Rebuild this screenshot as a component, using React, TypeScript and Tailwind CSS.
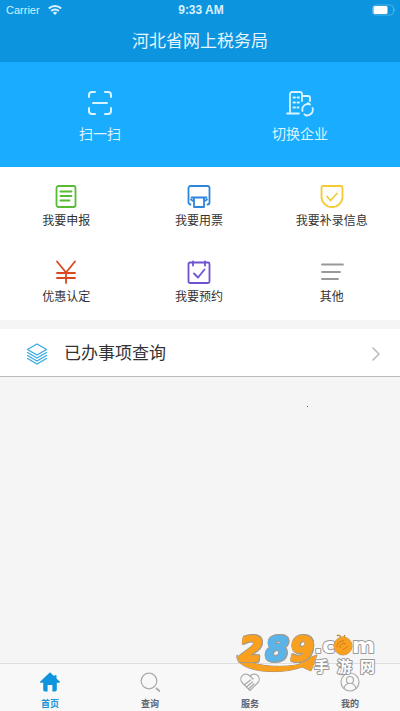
import type { ReactNode } from "react";

type Item = {
  label: string;
  icon: ReactNode;
};

const stroke = {
  fill: "none",
  stroke: "currentColor",
  strokeLinecap: "round",
  strokeLinejoin: "round",
} as const;

const quickActions: Item[] = [
  {
    label: "扫一扫",
    icon: (
      <svg className="h-7 w-7" viewBox="0 0 28 28" strokeWidth="2" {...stroke}>
        <path d="M3 8V6a3 3 0 0 1 3-3h3M19 3h3a3 3 0 0 1 3 3v2M25 19v3a3 3 0 0 1-3 3h-3M9 25H6a3 3 0 0 1-3-3v-3M7 14h14" />
      </svg>
    ),
  },
  {
    label: "切换企业",
    icon: (
      <svg className="h-7 w-7" viewBox="0 0 28 28" strokeWidth="1.8" {...stroke}>
        <path d="M1 24.500h12M4 24V5a2 2 0 0 1 2-2h8a2 2 0 0 1 2 2v7M16 7h6a2 2 0 0 1 2 2v3" />
        <path d="M7.500 8.500h1.500M11.500 8.500h1.500M7.500 13.500h1.500M11.500 13.500h1.500M7.500 18.500h1.500M11.500 18.500h1" />
        <path d="M24 15.500a5.500 5.500 0 0 0-7.500 6.500M24 15.500l-2-1.500M18.500 25.500a5.500 5.500 0 0 0 8-6.500M18.500 25.500l2 1.200" />
      </svg>
    ),
  },
];

const services: (Item & { color: string })[] = [
  {
    label: "我要申报",
    color: "text-[#57bb35]",
    icon: (
      <>
        <rect x="2.500" y="2" width="19" height="21" rx="2" />
        <path d="M6.500 7.500h11M6.500 12h11M6.500 16.500h9" />
      </>
    ),
  },
  {
    label: "我要用票",
    color: "text-[#2d86dc]",
    icon: (
      <>
        <path d="M3.500 20.500a2 2 0 0 1-2-2V4a2 2 0 0 1 2-2h17a2 2 0 0 1 2 2v14.500a2 2 0 0 1-2 2" />
        <path d="M4.500 13.500h15M7 13.500v9.500h10v-9.500M4 15.500l3 2M20 15.500l-3 2" />
      </>
    ),
  },
  {
    label: "我要补录信息",
    color: "text-[#f3cb35]",
    icon: (
      <>
        <path d="M3 2h18a1.500 1.500 0 0 1 1.500 1.500V13a10.500 10 0 0 1-21 0V3.500A1.500 1.500 0 0 1 3 2z" />
        <path d="M7 12.500l3.500 4 6.500-7" />
      </>
    ),
  },
  {
    label: "优惠认定",
    color: "text-[#d9481f]",
    icon: <path d="M3 1.500l9 11 9-11M12 12.500v10.500M3 13h18M3 18h18" />,
  },
  {
    label: "我要预约",
    color: "text-[#7052cf]",
    icon: (
      <>
        <rect x="1.500" y="2.500" width="21" height="20.500" rx="1.500" />
        <path d="M6 1.500v4M18 1.500v4M7 13.500l4 4 6.500-8" />
      </>
    ),
  },
  {
    label: "其他",
    color: "text-[#999]",
    icon: <path d="M2 4.500h21M2 12h18M2 19h16" />,
  },
];

const tabs: (Item & { active?: boolean })[] = [
  {
    label: "首页",
    active: true,
    icon: (
      <path
        d="M10 .3L.3 9.600c-.5.600-.2 1.100.5 1.100h2.400v7a1.800 1.800 0 0 0 1.800 1.800h2.600v-6.500h4.800v6.500h2.600a1.800 1.800 0 0 0 1.800-1.800v-7h2.400c.7 0 1-.5.500-1.100L16.500 6.500V3.300h-2.300v1z"
        fill="currentColor"
        stroke="none"
      />
    ),
  },
  {
    label: "查询",
    icon: (
      <>
        <circle cx="9" cy="9" r="7.800" />
        <path d="M16.500 16.500l3 2.500" strokeWidth="1.800" />
      </>
    ),
  },
  {
    label: "服务",
    icon: (
      <path d="M10 18.500L2.500 11C.5 9 .3 5.800 2 3.800 4 1.500 7.500 1.500 10 4c2.500-2.500 6-2.500 8-.2 1.700 2 1.500 5.200-.5 7.200zM10 4l3 3M10.500 8L4.500 12.800M12.500 10L6.500 15M14 12l-5.500 5" />
    ),
  },
  {
    label: "我的",
    icon: (
      <>
        <circle cx="10" cy="10" r="9" />
        <circle cx="10" cy="8" r="3.500" />
        <path d="M4 16.500c.5-3 2.500-4.500 4.200-5M16 16.500c-.5-3-2.500-4.500-4.200-5" />
      </>
    ),
  },
];

function StatusBar() {
  return (
    <div className="grid h-5 grid-cols-3 items-center pr-1 pl-1.5 text-[11px] text-[#d9f1ff]">
      <div className="flex items-center gap-2">
        <span>Carrier</span>
        <svg className="h-3 w-3.5" viewBox="0 0 14 12" fill="none" stroke="currentColor" strokeWidth="2">
          <path d="M.8 4.500a8.800 8.800 0 0 1 12.400 0M3.200 7a5.400 5.400 0 0 1 7.600 0" />
          <path d="M7 11L4.800 8.800a3.100 3.100 0 0 1 4.400 0z" fill="currentColor" stroke="none" />
        </svg>
      </div>
      <span className="text-center text-xs font-bold">9:33 AM</span>
      <svg className="h-3 w-6 justify-self-end" viewBox="0 0 24 12">
        <rect x=".5" y="1" width="21" height="10" rx="3" fill="none" stroke="#4db3ea" />
        <rect x="1.500" y="2" width="14" height="8" rx="1.500" fill="#fff" />
        <path d="M22.500 4.500a2 2 0 0 1 0 3z" fill="#5fbdf0" />
      </svg>
    </div>
  );
}

/** Site badge that floats over the bottom right corner. */
function Watermark() {
  return (
    <svg
      className="pointer-events-none absolute right-4 bottom-8 h-14 w-40 overflow-visible"
      viewBox="0 -8 160 56"
      paintOrder="stroke"
      strokeLinejoin="round"
    >
      <path
        d="M13 24C11 33 26 40 46 40.500C59 41 70 39 78 36L87 40L93 24L74 31L77 33C60 37 36 36 20 29z"
        fill="#f9a11f"
        stroke="#9a8c7c"
      />
      <g
        className="[filter:drop-shadow(1px_0_0_#a39a90)_drop-shadow(0_1px_0_#a39a90)_drop-shadow(0_-1px_0_#a39a90)]"
        fontFamily="'DejaVu Sans', sans-serif"
        fontWeight="700"
        fontStyle="italic"
        fontSize="34"
        strokeWidth="2"
      >
        <text x="15" y="30" fill="#f9a11f" stroke="#f9a11f">2</text>
        <text x="41" y="30" fill="#5ab4e8" stroke="#5ab4e8">8</text>
        <text x="66" y="30" fill="#f9a11f" stroke="#f9a11f">9</text>
      </g>
      <g
        fill="#fff"
        stroke="#999"
        strokeWidth="2"
        fontFamily="'DejaVu Sans', 'Noto Sans CJK SC', sans-serif"
        fontWeight="700"
      >
        <text x="90" y="22" fontSize="22">.c</text>
        <text x="128" y="22" fontSize="22">m</text>
        <text x="90" y="41" fontSize="15">手</text>
        <text x="113" y="41" fontSize="15">游</text>
        <text x="136" y="41" fontSize="15">网</text>
      </g>
      <circle cx="119" cy="15" r="9" fill="#f9a11f" stroke="#b09064" />
      <path d="M117 6c-1-2-3-2-4-1M120 6l1-2" stroke="#c08a40" strokeWidth="1.500" fill="none" />
      <path
        d="M113 16a6 6 0 0 1 7-6M116 17a4 4 0 0 1 6-4M119 19l5-4"
        fill="none"
        stroke="#c97f1c"
      />
    </svg>
  );
}

export default function App() {
  return (
    <div className="relative flex min-h-screen flex-col bg-[#f5f5f5] font-['Liberation_Sans','Noto_Sans_CJK_SC',sans-serif] text-[#333]">
      <header className="bg-[#0c94de] text-[#e3f5ff]">
        <StatusBar />
        <h1 className="h-[42px] pt-0.5 text-center text-[17px] leading-10">河北省网上税务局</h1>
      </header>

      <div className="grid h-[105px] grid-cols-2 bg-[#1aadff] text-[#d9f3ff]">
        {quickActions.map(({ label, icon }) => (
          <button key={label} className="flex flex-col items-center gap-2 pt-[27px] text-sm leading-[18px]">
            {icon}
            {label}
          </button>
        ))}
      </div>

      <main className="flex-1">
        <div className="grid h-[153px] grid-cols-3 grid-rows-[76px_76px] bg-white pr-0.5">
          {services.map(({ label, icon, color }) => (
            <button key={label} className="flex flex-col items-center gap-1 pt-[17px] text-xs leading-[18px]">
              <svg className={`h-6 w-6 ${color}`} viewBox="0 0 24 24" strokeWidth="1.800" {...stroke}>
                {icon}
              </svg>
              {label}
            </button>
          ))}
        </div>

        <a
          href="#done"
          className="mt-[9px] flex h-12 items-center border-b border-[#bbb] bg-white pt-0.5 pr-5 pl-[26px]"
        >
          <svg className="h-[22px] w-[22px] text-[#3ba9e6]" viewBox="0 0 22 22" strokeWidth="1.400" {...stroke}>
            <path d="M11 1l9.500 5.500L11 12 1.500 6.500zM1.500 9.500l9.500 5.500 9.500-5.500M1.500 12.500L11 18l9.500-5.500M1.500 15.500L11 21l9.500-5.500" />
          </svg>
          <span className="ml-4 flex-1 text-[17px]">已办事项查询</span>
          <svg className="h-3.5 w-2" viewBox="0 0 8 14" strokeWidth="1.600" {...stroke}>
            <path d="M1 1l6 6-6 6" stroke="#bbb" />
          </svg>
        </a>
      </main>

      <nav className="grid h-12 grid-cols-4 border-t border-[#dedede] bg-[#f8f8f8]">
        {tabs.map(({ label, icon, active }) => (
          <a
            key={label}
            href="#tab"
            className={`flex flex-col items-center gap-1 pt-2 text-[9px] leading-4 font-bold ${active ? "text-[#1d92d6]" : "text-[#62626e]"}`}
          >
            <svg
              className={`h-5 w-5 shrink-0 ${active ? "text-[#0d94dc]" : "text-[#aaa]"}`}
              viewBox="0 0 20 20"
              strokeWidth="1.200"
              {...stroke}
            >
              {icon}
            </svg>
            {label}
          </a>
        ))}
      </nav>

      {/* Stray speck on the empty page area */}
      <span className="absolute top-[406px] right-[92px] size-px bg-[#555]" />
      <Watermark />
    </div>
  );
}
